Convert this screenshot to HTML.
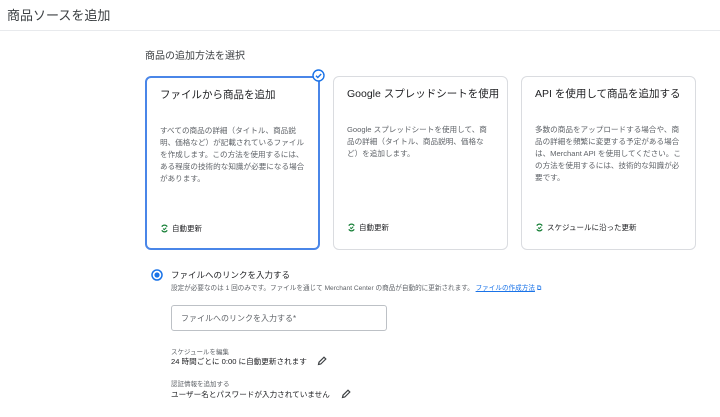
<!DOCTYPE html>
<html><head><meta charset="utf-8"><style>
*{box-sizing:border-box;margin:0;padding:0}
body{width:720px;height:417px;overflow:hidden;background:#fff;font-family:"Liberation Sans","Noto Sans CJK JP",sans-serif;color:#202124;position:relative}
.a{position:absolute;white-space:nowrap}
.card{position:absolute;top:76px;width:175px;height:174px;border:1px solid #dadce0;border-radius:6px}
.card.sel{border:2px solid #4a86e8}
.card h3{position:absolute;left:13px;top:9px;font-size:10.5px;font-weight:normal;color:#202124}
.card p{position:absolute;left:13px;top:47px;width:147px;font-size:7.6px;line-height:12px;color:#5f6368}
.card .u{position:absolute;left:13px;top:145px;font-size:7.5px;color:#202124}
.card .u svg{vertical-align:-2px;margin-right:3px}
</style></head><body>
<div class="a" style="left:7px;top:5px;font-size:13px;color:#3c4043">商品ソースを追加</div>
<div class="a" style="left:0;top:30px;width:720px;height:1px;background:#e8eaed"></div>
<div class="a" style="left:145px;top:47px;font-size:10px;color:#3c4043">商品の追加方法を選択</div>

<div class="card sel" style="left:145px"><h3>ファイルから商品を追加</h3>
<p>すべての商品の詳細（タイトル、商品説明、価格など）が記載されているファイルを作成します。この方法を使用するには、ある程度の技術的な知識が必要になる場合があります。</p>
<div class="u"><svg width="9" height="9" viewBox="0 0 10 10"><path d="M8 3A3.5 3.5 0 0 0 2 3M2 7a3.5 3.5 0 0 0 6 0" stroke="#188038" stroke-width="1.4" fill="none"/><path d="M3.5 5l1.2 1.2L7 4" stroke="#188038" stroke-width="1.2" fill="none"/></svg>自動更新</div></div>
<svg class="a" style="left:312px;top:69px" width="13" height="13" viewBox="0 0 13 13"><circle cx="6.5" cy="6.5" r="5.5" fill="#fff" stroke="#1a73e8" stroke-width="1.4"/><path d="M4 6.7l1.8 1.8L9.2 5" stroke="#1a73e8" stroke-width="1.4" fill="none"/></svg>

<div class="card" style="left:333px"><h3>Google スプレッドシートを使用</h3>
<p>Google スプレッドシートを使用して、商品の詳細（タイトル、商品説明、価格など）を追加します。</p>
<div class="u"><svg width="9" height="9" viewBox="0 0 10 10"><path d="M8 3A3.5 3.5 0 0 0 2 3M2 7a3.5 3.5 0 0 0 6 0" stroke="#188038" stroke-width="1.4" fill="none"/><path d="M3.5 5l1.2 1.2L7 4" stroke="#188038" stroke-width="1.2" fill="none"/></svg>自動更新</div></div>

<div class="card" style="left:521px"><h3>API を使用して商品を追加する</h3>
<p>多数の商品をアップロードする場合や、商品の詳細を頻繁に変更する予定がある場合は、Merchant API を使用してください。この方法を使用するには、技術的な知識が必要です。</p>
<div class="u"><svg width="9" height="9" viewBox="0 0 10 10"><path d="M8 3A3.5 3.5 0 0 0 2 3M2 7a3.5 3.5 0 0 0 6 0" stroke="#188038" stroke-width="1.4" fill="none"/><path d="M3.5 5l1.2 1.2L7 4" stroke="#188038" stroke-width="1.2" fill="none"/></svg>スケジュールに沿った更新</div></div>

<svg class="a" style="left:151px;top:269px" width="12" height="12" viewBox="0 0 12 12"><circle cx="6" cy="6" r="5" fill="none" stroke="#1a73e8" stroke-width="1.5"/><circle cx="6" cy="6" r="2.6" fill="#1a73e8"/></svg>
<div class="a" style="left:171px;top:269px;font-size:8.5px;color:#202124">ファイルへのリンクを入力する</div>
<div class="a" style="left:171px;top:282px;font-size:6.6px;color:#5f6368">設定が必要なのは 1 回のみです。ファイルを通じて Merchant Center の商品が自動的に更新されます。 <span style="color:#1a73e8;text-decoration:underline">ファイルの作成方法</span> <span style="color:#1a73e8">⧉</span></div>
<div class="a" style="left:171px;top:305px;width:216px;height:26px;border:1px solid #bdc1c6;border-radius:3px"></div>
<div class="a" style="left:181px;top:313px;font-size:8px;color:#5f6368">ファイルへのリンクを入力する*</div>
<div class="a" style="left:171px;top:346px;font-size:6.5px;color:#5f6368">スケジュールを編集</div>
<div class="a" style="left:171px;top:356px;font-size:7.6px;color:#202124">24 時間ごとに 0:00 に自動更新されます</div>
<svg class="a" style="left:317px;top:356px" width="10" height="10" viewBox="0 0 10 10"><path d="M1.5 8.5l0.5-2.3 5-5 1.8 1.8-5 5z" fill="none" stroke="#3c4043" stroke-width="1.2"/></svg>
<div class="a" style="left:171px;top:378px;font-size:6.5px;color:#5f6368">認証情報を追加する</div>
<div class="a" style="left:171px;top:389px;font-size:7.6px;color:#202124">ユーザー名とパスワードが入力されていません</div>
<svg class="a" style="left:341px;top:389px" width="10" height="10" viewBox="0 0 10 10"><path d="M1.5 8.5l0.5-2.3 5-5 1.8 1.8-5 5z" fill="none" stroke="#3c4043" stroke-width="1.2"/></svg>
</body></html>
